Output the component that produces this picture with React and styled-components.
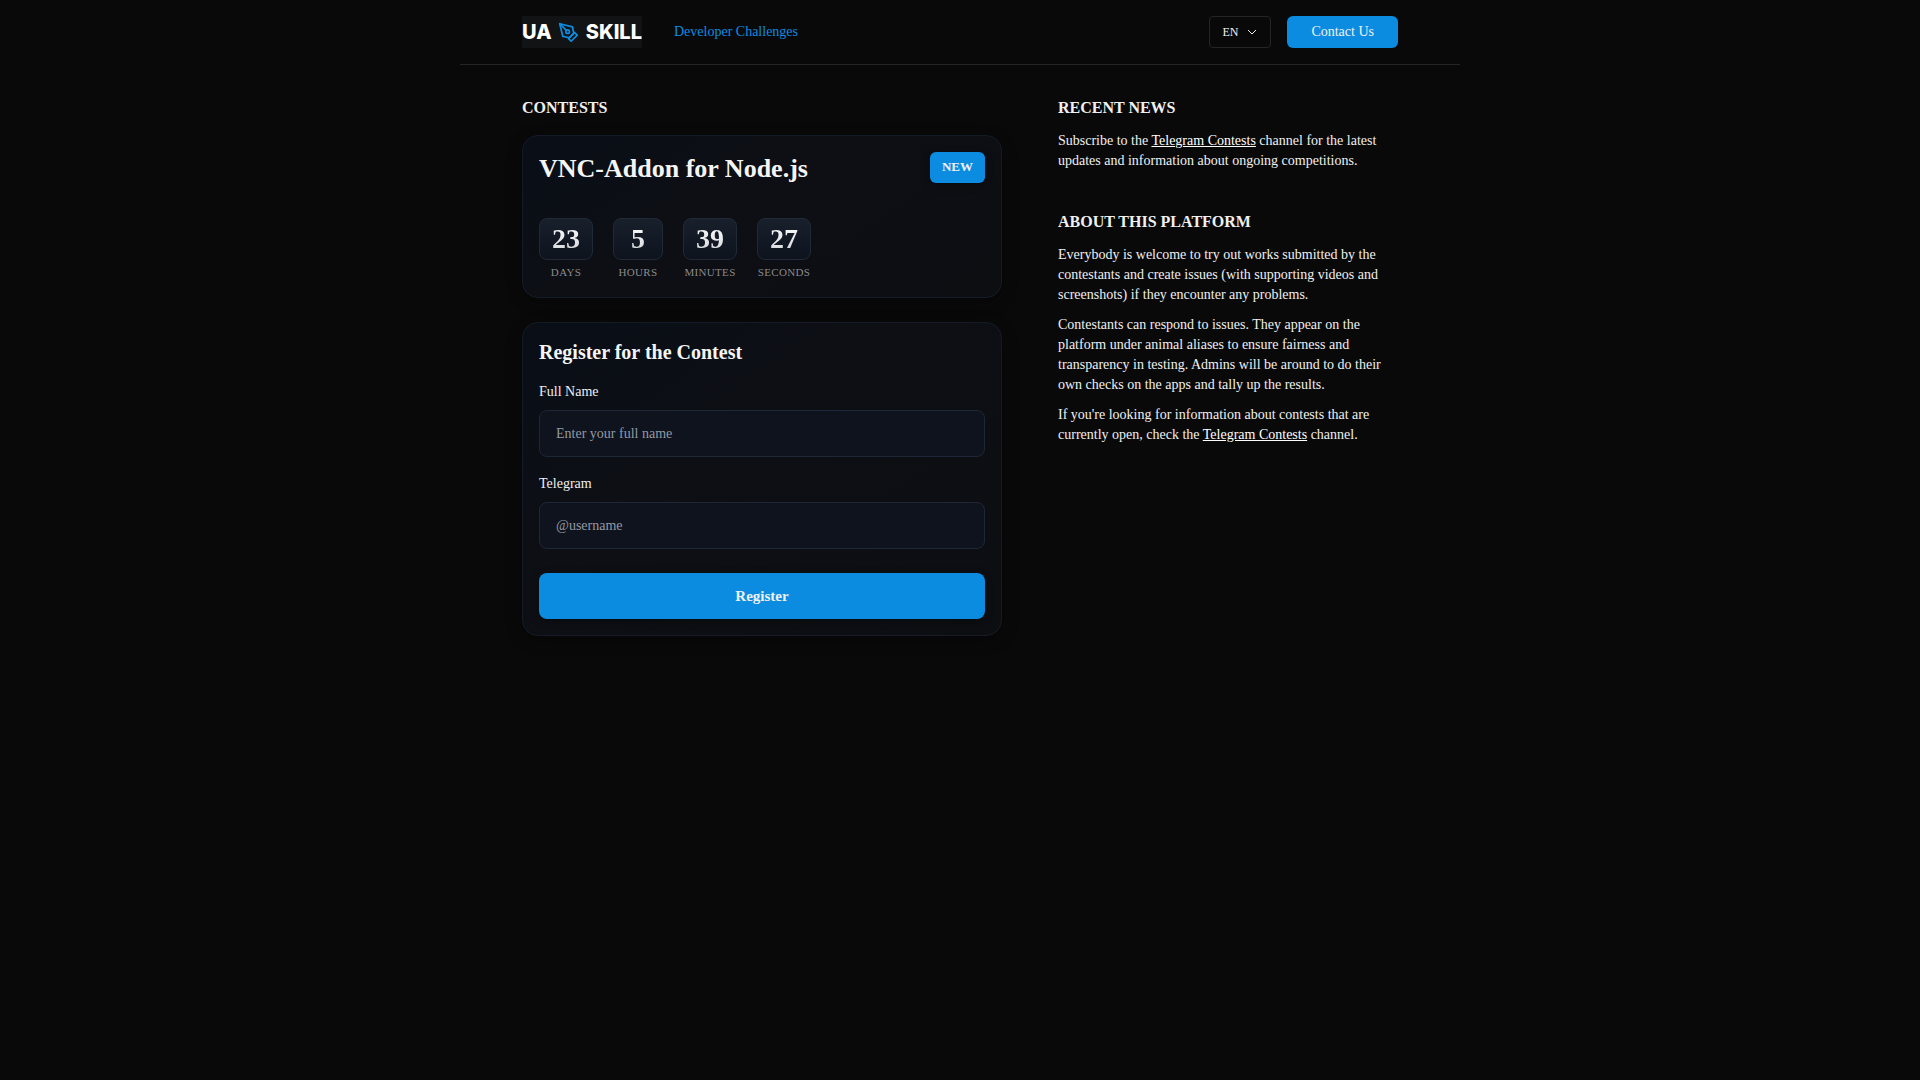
import React from 'react';
import styled, { createGlobalStyle } from 'styled-components';

const GlobalStyle = createGlobalStyle`
  *, *::before, *::after { box-sizing: border-box; }
  body {
    margin: 0;
    min-height: 100vh;
    background: #090909;
    color: #f0f0f0;
    font-family: "Liberation Serif", serif;
    font-size: 14px;
    line-height: 20px;
  }
  h1, h2, h3, p { margin: 0; }
  input, select, button { font-family: inherit; }
`;

const Header = styled.header`
  max-width: 1000px;
  margin: 0 auto;
  padding: 16px 62px;
  display: flex;
  align-items: center;
  gap: 32px;
  border-bottom: 1px solid #252525;
`;

const Logo = styled.a`
  width: 120px;
  height: 32px;
  display: flex;
  align-items: center;
  justify-content: space-between;
  background: #111314;
  color: #fff;
  font-family: Inter, sans-serif;
  font-size: 20px;
  line-height: 32px;
  font-weight: 800;
  text-decoration: none;
`;

const NavLink = styled.a`
  color: #0c8ce0;
  text-decoration: none;
`;

const Actions = styled.div`
  margin-left: auto;
  display: flex;
  gap: 16px;
`;

const LanguageBox = styled.div`
  position: relative;
  color: #f0f0f0;

  svg {
    position: absolute;
    right: 14px;
    top: 12px;
    pointer-events: none;
  }
`;

const LanguageSelect = styled.select`
  appearance: none;
  display: block;
  width: 62px;
  height: 32px;
  padding: 0 12px;
  border: 1px solid #252525;
  border-radius: 4px;
  background: transparent;
  color: inherit;
  font-size: 12px;
`;

const ContactButton = styled.button`
  height: 32px;
  padding: 0 24px;
  border: 0;
  border-radius: 6px;
  background: #0c8ce0;
  color: #f0f0f0;
  font-size: 14px;
`;

const Main = styled.main`
  max-width: 1000px;
  margin: 0 auto;
  padding: 32px 62px;
  display: grid;
  grid-template-columns: minmax(0, 480fr) minmax(0, 340fr);
  gap: 56px;
  align-items: start;
`;

const Contests = styled.section`
  display: flex;
  flex-direction: column;
`;

const SectionTitle = styled.h2`
  margin-bottom: ${(p) => (p.$wide ? 16 : 12)}px;
  font-size: 16px;
  line-height: 22px;
  font-weight: 700;
  text-transform: uppercase;
`;

const Card = styled.article`
  padding: 16px;
  border: 1px solid #151b26;
  border-radius: 16px;
  background: linear-gradient(145deg, #090e17 0%, #0d0f14 40%, #0d0e12 100%);
  box-shadow: 0 4px 16px rgba(0, 0, 0, 0.3);

  & + & { margin-top: 24px; }
`;

const CardHead = styled.div`
  display: flex;
  justify-content: space-between;
  align-items: flex-start;
  margin-bottom: 32px;
`;

const ContestName = styled.h1`
  font-size: 26px;
  line-height: 34px;
  font-weight: 700;
  color: #f5f5f5;
`;

const Badge = styled.span`
  padding: 6px 12px 7px;
  border-radius: 6px;
  background: #0c8ce0;
  box-shadow: 0 2px 8px rgba(0, 0, 0, 0.3);
  font-size: 13px;
  line-height: 18px;
  font-weight: 700;
`;

const Countdown = styled.div`
  display: flex;
  gap: 20px;
  padding-bottom: 2px;
`;

const Unit = styled.div`
  display: flex;
  flex-direction: column;
  align-items: center;
  gap: 6px;
`;

const UnitBox = styled.div`
  min-width: 50px;
  padding: 4px 12px;
  border: 1px solid #202937;
  border-radius: 8px;
  background: linear-gradient(180deg, #18202b, #0e131e);
  text-align: center;
`;

const UnitValue = styled.span`
  display: block;
  font-size: 28px;
  line-height: 32px;
  font-weight: 700;
  background: linear-gradient(180deg, #fff, #d0d3d8);
  background-clip: text;
  color: transparent;
`;

const UnitLabel = styled.span`
  color: #8a8a8c;
  font-size: 11px;
  line-height: 13px;
  letter-spacing: 0.03em;
  text-transform: uppercase;
`;

const FormTitle = styled.h2`
  margin-bottom: 17px;
  font-size: 20px;
  line-height: 26px;
  font-weight: 700;
  color: #f5f5f5;
`;

const Field = styled.div`
  display: flex;
  flex-direction: column;
  gap: 8px;
  margin-bottom: ${(p) => (p.$last ? 24 : 17)}px;
`;

const FieldLabel = styled.label`
  line-height: 20px;
`;

const TextInput = styled.input`
  width: 100%;
  height: 47px;
  padding: 0 16px;
  border: 1px solid #1e2735;
  border-radius: 8px;
  background: #0e131e;
  color: #f0f0f0;
  font-size: 14px;

  &::placeholder { color: #9499a2; opacity: 1; }
`;

const SubmitButton = styled.button`
  display: block;
  width: 100%;
  height: 46px;
  border: 0;
  border-radius: 8px;
  background: #0c8ce0;
  box-shadow: 0 2px 8px rgba(0, 0, 0, 0.3);
  color: #f0f0f0;
  font-size: 15px;
  font-weight: 700;
`;

const Sidebar = styled.aside`
  display: flex;
  flex-direction: column;
  gap: 40px;
`;

const Prose = styled.div`
  display: flex;
  flex-direction: column;
  gap: 10px;

  a { color: #fff; text-decoration: underline; }
`;

const PenIcon = () => (
  <svg width="21" height="21" viewBox="0 0 24 24" fill="none" stroke="#0c8ce0" strokeWidth="2" strokeLinecap="round" strokeLinejoin="round" aria-hidden="true">
    <path d="M12 19l7-7 3 3-7 7-3-3z" />
    <path d="M18 13l-1.5-7.5L2 2l3.5 14.5L13 18l5-5z" />
    <path d="M2 2l7.586 7.586" />
    <circle cx="11" cy="11" r="2" />
  </svg>
);

const Chevron = () => (
  <svg width="10" height="8" viewBox="0 0 10 8" fill="none" stroke="currentColor" strokeWidth="1" aria-hidden="true">
    <path d="M1 2l4 4 4-4" />
  </svg>
);

const remaining = [
  ['Days', 23],
  ['Hours', 5],
  ['Minutes', 39],
  ['Seconds', 27],
];

const ChannelLink = () => <a href="#telegram">Telegram Contests</a>;

export default function App() {
  return (
    <>
      <GlobalStyle />
      <Header>
        <Logo href="#home">
          <span>UA</span>
          <PenIcon />
          <span>SKILL</span>
        </Logo>
        <NavLink href="#challenges">Developer Challenges</NavLink>
        <Actions>
          <LanguageBox>
            <LanguageSelect aria-label="Language" defaultValue="en">
              <option value="en">EN</option>
            </LanguageSelect>
            <Chevron />
          </LanguageBox>
          <ContactButton type="button">Contact Us</ContactButton>
        </Actions>
      </Header>
      <Main>
        <Contests>
          <SectionTitle $wide>Contests</SectionTitle>
          <Card>
            <CardHead>
              <ContestName>VNC-Addon for Node.js</ContestName>
              <Badge>NEW</Badge>
            </CardHead>
            <Countdown>
              {remaining.map(([label, value]) => (
                <Unit key={label}>
                  <UnitBox><UnitValue>{value}</UnitValue></UnitBox>
                  <UnitLabel>{label}</UnitLabel>
                </Unit>
              ))}
            </Countdown>
          </Card>
          <Card>
            <FormTitle>Register for the Contest</FormTitle>
            <form onSubmit={(e) => e.preventDefault()}>
              <Field>
                <FieldLabel htmlFor="full-name">Full Name</FieldLabel>
                <TextInput id="full-name" type="text" placeholder="Enter your full name" />
              </Field>
              <Field $last>
                <FieldLabel htmlFor="telegram-user">Telegram</FieldLabel>
                <TextInput id="telegram-user" type="text" placeholder="@username" />
              </Field>
              <SubmitButton type="submit">Register</SubmitButton>
            </form>
          </Card>
        </Contests>
        <Sidebar>
          <section>
            <SectionTitle>Recent News</SectionTitle>
            <Prose>
              <p>Subscribe to the <ChannelLink /> channel for the latest updates and information about ongoing competitions.</p>
            </Prose>
          </section>
          <section>
            <SectionTitle>About This Platform</SectionTitle>
            <Prose>
              <p>Everybody is welcome to try out works submitted by the contestants and create issues (with supporting videos and screenshots) if they encounter any problems.</p>
              <p>Contestants can respond to issues. They appear on the platform under animal aliases to ensure fairness and transparency in testing. Admins will be around to do their own checks on the apps and tally up the results.</p>
              <p>If you're looking for information about contests that are currently open, check the <ChannelLink /> channel.</p>
            </Prose>
          </section>
        </Sidebar>
      </Main>
    </>
  );
}
